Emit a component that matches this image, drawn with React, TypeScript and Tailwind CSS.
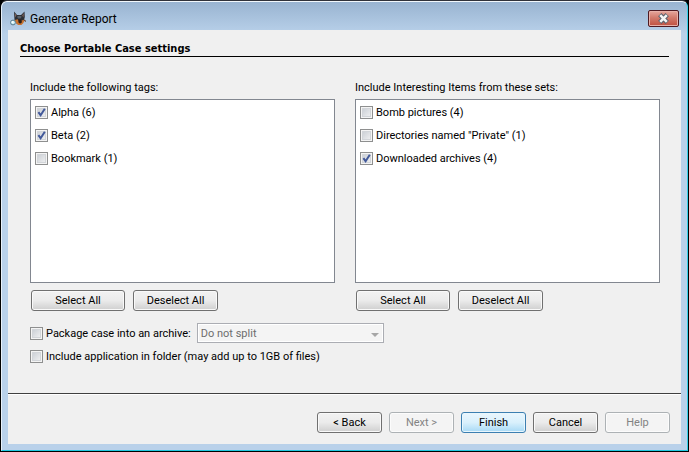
import { useState } from "react";
import type { ReactNode } from "react";

type Item = { name: string; checked: boolean };

function CheckBox({
  label,
  checked,
  onChange,
}: {
  label: string;
  checked: boolean;
  onChange: () => void;
}) {
  return (
    <label className="flex w-fit items-center gap-[3px]">
      <span className="relative size-[13px] shrink-0">
        <input
          type="checkbox"
          checked={checked}
          onChange={onChange}
          className="block size-[13px] appearance-none border border-[#8e8f8f] bg-linear-to-br from-[#c4c9d0] to-[#f6f6f6] shadow-[inset_0_0_0_1px_#f4f4f4,inset_0_0_0_2px_#d2d5d9]"
        />
        {checked && (
          <svg viewBox="0 0 13 13" className="pointer-events-none absolute inset-0 size-[13px]">
            <path d="M3.4 6.2 L5.6 9.2 L9.8 2.8" fill="none" stroke="#42599a" strokeWidth="2" />
          </svg>
        )}
      </span>
      <span className="leading-[15px] whitespace-nowrap">{label}</span>
    </label>
  );
}

function Button({
  children,
  className,
  variant = "normal",
}: {
  children: ReactNode;
  className: string;
  variant?: "normal" | "primary" | "disabled";
}) {
  const look = {
    normal:
      "border-[#707070] from-[#f2f2f2] via-[#ebebeb] via-50% to-[#cfcfcf] shadow-[inset_0_0_0_1px_#f9f9f9]",
    primary:
      "border-[#3c7fb1] from-[#eaf6fd] via-[#d9f0fc] via-50% to-[#a7d9f5] shadow-[inset_0_0_0_1px_#e8f6fd]",
    disabled:
      "border-[#adb2b5] from-[#f4f4f4] via-[#f4f4f4] to-[#f4f4f4] text-[#838383] shadow-[inset_0_0_0_1px_#fcfcfc]",
  }[variant];
  return (
    <button
      type="button"
      disabled={variant === "disabled"}
      className={`flex h-[21px] items-center justify-center rounded-[3px] border bg-linear-to-b leading-[15px] whitespace-nowrap ${look} ${className}`}
    >
      {children}
    </button>
  );
}

function ItemPicker({ title, initial }: { title: string; initial: Item[] }) {
  const [items, setItems] = useState(initial);
  return (
    <section className="min-w-0 flex-1">
      <h2 className="leading-[15px]">{title}</h2>
      <ul className="mt-1 flex h-[184px] flex-col gap-2 border border-[#828790] bg-white px-1 py-[5px]">
        {items.map((item, i) => (
          <li key={item.name}>
            <CheckBox
              label={item.name}
              checked={item.checked}
              onChange={() =>
                setItems(items.map((it, j) => (j === i ? { ...it, checked: !it.checked } : it)))
              }
            />
          </li>
        ))}
      </ul>
      <div className="mt-[7px] flex gap-2 pl-px">
        <Button className="w-[94px]">Select All</Button>
        <Button className="w-[85px]">Deselect All</Button>
      </div>
    </section>
  );
}

function DogIcon() {
  return (
    <svg viewBox="0 0 16 16" className="size-4">
      <path d="M4 0.5 L7 4 H11 L14.5 0.5 L14.8 6 L13.8 10 L11 13 H7 L4.5 9 Z" fill="#2c2f36" />
      <path d="M4.8 2 L6.4 4.4 L5.4 6.4 Z M13.8 2 L12.2 4.4 L13.4 6.4 Z" fill="#8a6a60" />
      <path d="M7 5.5 L9.3 4.8 L11.8 5.5 L10.5 7.5 H8 Z" fill="#59616b" />
      <path d="M4.8 9 L7.6 8.2 L9 10 L11 9.8 L14.6 8.4 L13.4 12 L11.4 14 H8 L6 12 Z" fill="#c9732f" />
      <path d="M8.4 8.6 H11.2 L12 11.2 L10 12.8 L8.4 11.2 Z" fill="#2b211e" />
      <path d="M14 9 L16 10.4" stroke="#6c4a35" strokeWidth="1.2" />
      <circle cx="3" cy="11.5" r="2.4" fill="#c9eff5" stroke="#56798a" strokeWidth="1" />
      <circle cx="2.6" cy="11" r="1" fill="#ffffff" />
    </svg>
  );
}

export default function App() {
  const [pack, setPack] = useState(false);
  const [includeApp, setIncludeApp] = useState(false);
  return (
    <div className="bg-black">
      <main className="rounded-t-[7px] border border-black border-t-[#30323a] font-[Roboto,'Liberation_Sans',sans-serif] text-[11px] text-black">
        <div className="rounded-t-[6px] border border-t-[#f2f8fc] border-r-[#35cfe8] border-b-[#20c8e0] border-l-[#e8f1fa] bg-[#b9d1ea] bg-linear-to-b from-[#99b4d1] to-[#b9d1ea] to-[32px] px-[6px] pb-[6px]">
          <header className="flex h-7 items-center justify-between px-[2px] pt-[5px]">
            <div className="flex items-center gap-1">
              <DogIcon />
              <h1 className="text-[12px] leading-4">Generate Report</h1>
            </div>
            <button
              type="button"
              aria-label="Close"
              className="flex h-[17px] w-[31px] items-center justify-center rounded-[2px] border border-[#4e1a22] bg-linear-to-b from-[#e6a79d] via-[#d27a6c] via-45% to-[#c05040] shadow-[inset_0_0_0_1px_#e8b0a8]"
            >
              <svg viewBox="0 0 13 11" className="h-[11px] w-[13px]">
                <path d="M2.8 1.6 L10.2 9.4 M10.2 1.6 L2.8 9.4" stroke="#59606c" strokeWidth="4.6" />
                <path d="M3.2 2.2 L9.8 8.8 M9.8 2.2 L3.2 8.8" stroke="#f4f4f4" strokeWidth="2.6" />
              </svg>
            </button>
          </header>

          <div className="bg-[#f0f0f0]">
            <div className="px-3 pt-[11px]">
              <h2 className="border-b border-black font-['DejaVu_Sans_Condensed','DejaVu_Sans',sans-serif] leading-[15px] font-bold">
                Choose Portable Case settings
              </h2>
              <div className="pt-[23px] pr-[9px] pl-[10px]">
                <div className="flex gap-5">
                  <ItemPicker
                    title="Include the following tags:"
                    initial={[
                      { name: "Alpha (6)", checked: true },
                      { name: "Beta (2)", checked: true },
                      { name: "Bookmark (1)", checked: false },
                    ]}
                  />
                  <ItemPicker
                    title="Include Interesting Items from these sets:"
                    initial={[
                      { name: "Bomb pictures (4)", checked: false },
                      { name: 'Directories named "Private" (1)', checked: false },
                      { name: "Downloaded archives (4)", checked: true },
                    ]}
                  />
                </div>

                <div className="mt-3 flex h-5 items-center gap-[6px]">
                  <CheckBox
                    label="Package case into an archive:"
                    checked={pack}
                    onChange={() => setPack(!pack)}
                  />
                  <div className="relative">
                    <select
                      disabled
                      aria-label="Split archive"
                      className="block h-5 w-[187px] appearance-none border border-[#abadb3] bg-[#f4f4f4] px-[3px] leading-[15px] text-[#6d6d6d] opacity-100 shadow-[inset_0_0_0_1px_#ffffff]"
                    >
                      <option>Do not split</option>
                    </select>
                    <svg
                      viewBox="0 0 8 4"
                      className="pointer-events-none absolute top-[10px] right-[5px] h-1 w-2"
                    >
                      <path d="M0 0 H8 L4 4 Z" fill="#a6a6a6" />
                    </svg>
                  </div>
                </div>
                <div className="mt-[6px]">
                  <CheckBox
                    label="Include application in folder (may add up to 1GB of files)"
                    checked={includeApp}
                    onChange={() => setIncludeApp(!includeApp)}
                  />
                </div>
              </div>
            </div>

            <footer className="mt-[29px] flex justify-end gap-[7px] border-t border-[#404040] px-[11px] pt-[18px] pb-[11px] shadow-[inset_0_1px_0_#ffffff]">
              <Button className="w-[65px]">&lt; Back</Button>
              <Button className="w-[65px]" variant="disabled">
                Next &gt;
              </Button>
              <Button className="w-[65px]" variant="primary">
                Finish
              </Button>
              <Button className="w-[65px]">Cancel</Button>
              <Button className="w-[65px]" variant="disabled">
                Help
              </Button>
            </footer>
          </div>
        </div>
      </main>
    </div>
  );
}
